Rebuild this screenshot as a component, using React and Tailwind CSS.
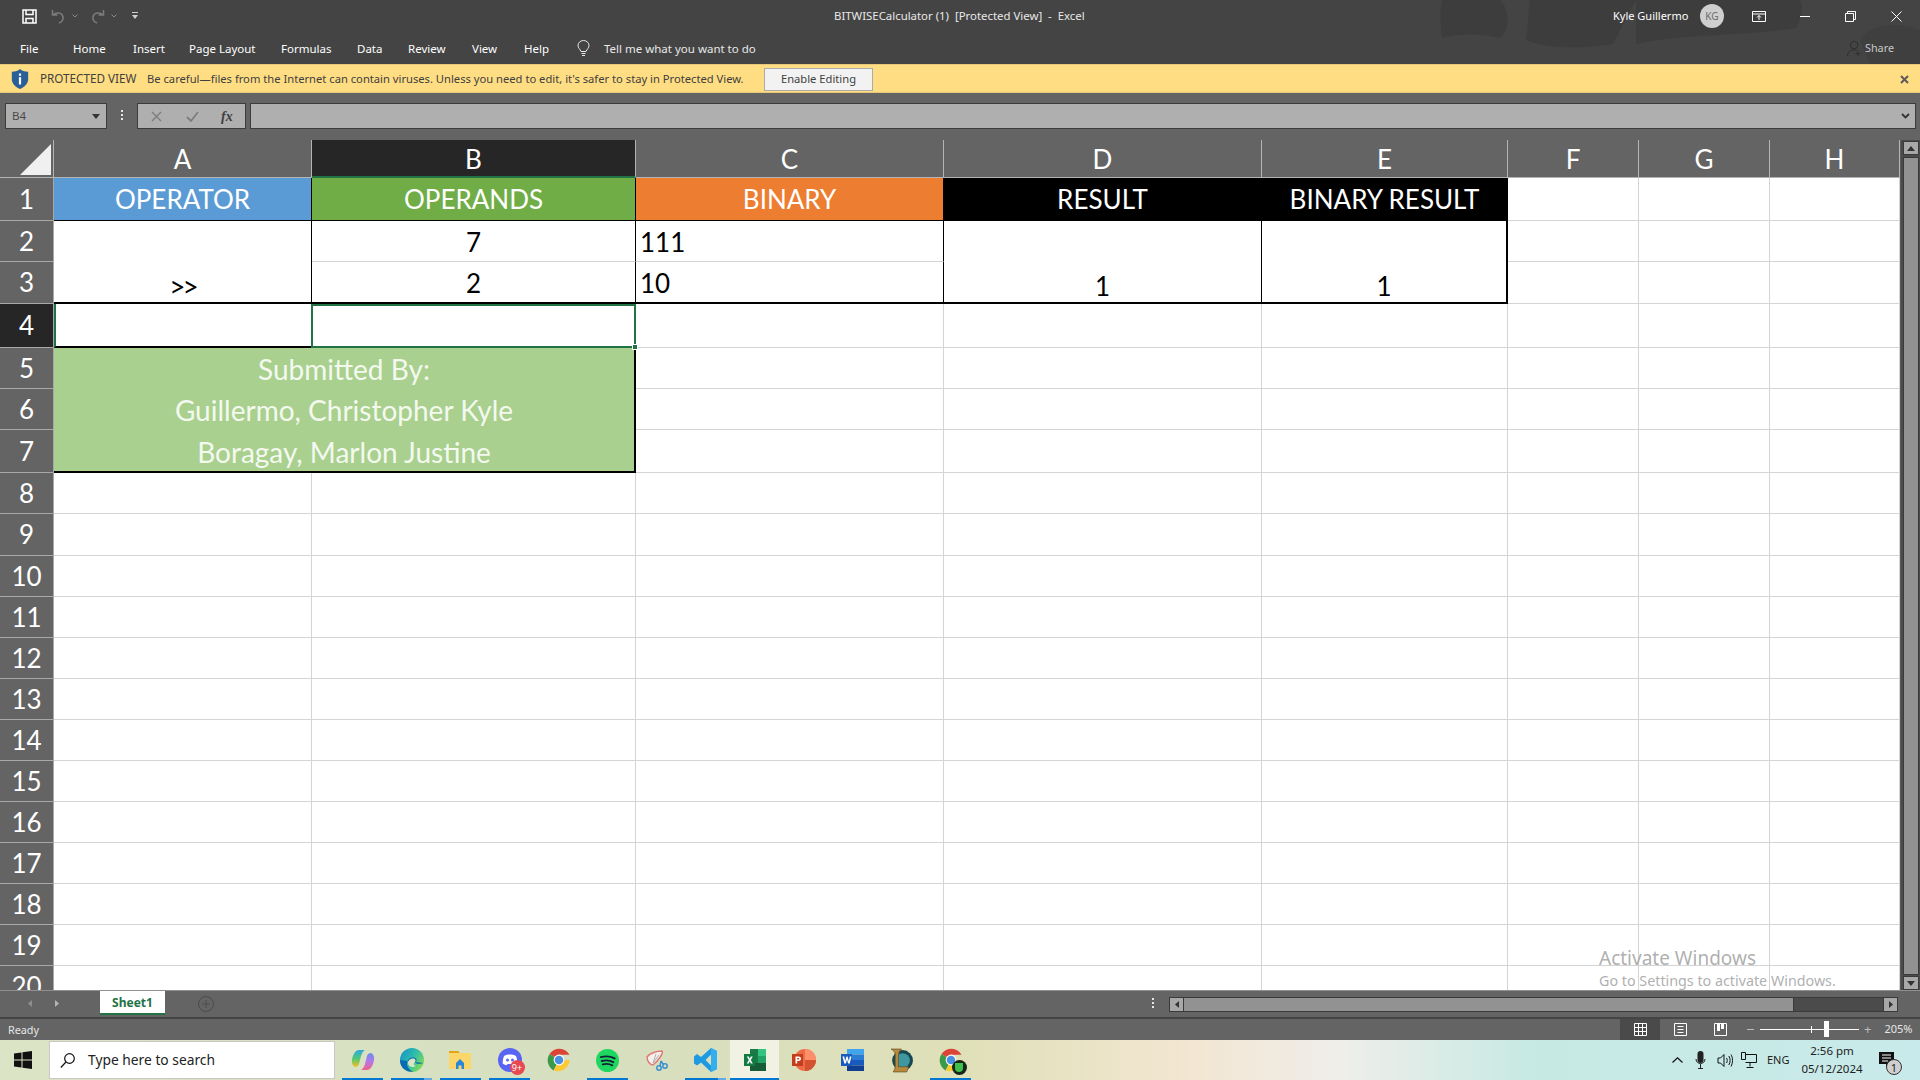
// App.jsx - Excel window in protected view, with the Windows taskbar under it

import React from "react";

const UI_FONT = "font-['Noto_Sans','Open_Sans',sans-serif]";
const SHEET_FONT = "font-['Lato','Noto_Sans',sans-serif]";

const COLUMNS = ["A", "B", "C", "D", "E", "F", "G", "H"];
const BLANK_ROWS = [8, 9, 10, 11, 12, 13, 14, 15, 16, 17, 18, 19, 20];
const TABS = [
  { label: "File", width: "w-[53px]" },
  { label: "Home", width: "w-[60px]" },
  { label: "Insert", width: "w-[56px]" },
  { label: "Page Layout", width: "w-[92px]" },
  { label: "Formulas", width: "w-[76px]" },
  { label: "Data", width: "w-[51px]" },
  { label: "Review", width: "w-[64px]" },
  { label: "View", width: "w-[52px]" },
  { label: "Help", width: "w-[54px]" },
];

// Plain white grid cell
const Blank = () => (
  <div className="bg-white border-r border-b border-[#d4d4d4]" />
);

const ColHeader = ({ label, active }) => (
  <div
    className={`flex items-center justify-center border-r border-[#b4b4b4] border-b pt-[2px] text-[26px] text-white ${
      active ? "bg-[#262626] border-b-2 border-b-[#217346]" : "bg-[#646464] border-b-[#b4b4b4]"
    }`}
  >
    {label}
  </div>
);

const RowHeader = ({ n, active }) => (
  <div
    className={`flex items-center justify-center overflow-hidden border-b border-r border-[#a8a8a8] text-[26px] text-white ${
      active ? "bg-[#262626]" : "bg-[#646464]"
    }`}
  >
    {n}
  </div>
);

const TitleHeader = ({ label, color, extra }) => (
  <div
    className={`flex items-center justify-center border-r border-b border-black text-[26px] text-white ${color} ${extra || ""}`}
  >
    {label}
  </div>
);

const TitleTexture = () => (
  <svg className="absolute top-0 left-[1400px] h-[64px] w-[520px]" viewBox="0 0 520 64">
    <path d="M42 0 C40 10 40 25 42 38 C60 33 80 34 100 38 C110 30 110 10 100 0 Z" fill="#3d3d3d" />
    <path d="M130 0 C128 15 128 30 126 40 C150 50 190 48 213 44 L236 0 Z" fill="#3d3d3d" />
    <path d="M236 0 L236 44 C280 34 350 36 396 28 C400 20 405 10 400 0 Z" fill="#3d3d3d" />
    <path d="M460 40 C470 22 500 22 520 30 L520 64 L470 64 Z" fill="#3f3f3f" />
  </svg>
);

const TitleBar = () => (
  <div className="flex h-[32px] items-center text-white">
    <svg className="ml-[22px] h-[15px] w-[15px]" viewBox="0 0 15 15" fill="none" stroke="#fff" strokeWidth="1.5">
      <path d="M1 1h13v13H1z" />
      <path d="M4 1v4.500h7V1M4 14V9.500h7V14" />
    </svg>
    <svg className="ml-[14px] h-[15px] w-[15px]" viewBox="0 0 15 15" fill="none" stroke="#7b7b7b" strokeWidth="1.6">
      <path d="M1.500 1v5h5M2 6c3-3 9-3 10 2 .5 3-1.500 5-4 6" />
    </svg>
    <svg className="ml-[6px] h-[4px] w-[6px]" viewBox="0 0 6 4" fill="none" stroke="#8a8a8a">
      <path d="M.5.5 3 3 5.500.5" />
    </svg>
    <svg className="ml-[12px] h-[15px] w-[15px]" viewBox="0 0 15 15" fill="none" stroke="#7b7b7b" strokeWidth="1.6">
      <path d="M13.500 1v5h-5M13 6c-3-3-9-3-10 2-.5 3 1.500 5 4 6" />
    </svg>
    <svg className="ml-[6px] h-[4px] w-[6px]" viewBox="0 0 6 4" fill="none" stroke="#8a8a8a">
      <path d="M.5.5 3 3 5.500.5" />
    </svg>
    <svg className="ml-[15px] h-[8px] w-[6px]" viewBox="0 0 6 8" fill="#d0d0d0">
      <path d="M0 0h6v1H0zM0 3h6L3 7z" />
    </svg>
    <div className="ml-[696px] w-[260px] whitespace-pre text-[11.4px] text-[#e8e8e8]">
      BITWISECalculator (1)  [Protected View]  -  Excel
    </div>
    <div className="ml-[519px] w-[76px] whitespace-nowrap text-[11px]">Kyle Guillermo</div>
    <div className="ml-[11px] flex h-[24px] w-[24px] items-center justify-center rounded-full bg-[#cfcfcf] text-[10px] text-[#6b6b6b]">
      KG
    </div>
    <svg className="ml-[28px] h-[11px] w-[14px]" viewBox="0 0 14 11" fill="none" stroke="#fff">
      <path d="M.5.5h13v10H.5zM.5 3h13M7 9V4.500M5 6.500l2-2 2 2" />
    </svg>
    <div className="ml-[34px] h-px w-[10px] bg-white" />
    <svg className="ml-[35px] h-[11px] w-[11px]" viewBox="0 0 11 11" fill="none" stroke="#fff">
      <path d="M.5 2.500h8v8h-8zM2.500 2.500v-2h8v8h-2" />
    </svg>
    <svg className="ml-[35px] h-[11px] w-[11px]" viewBox="0 0 11 11" fill="none" stroke="#fff">
      <path d="M.5.5l10 10M10.500.5l-10 10" />
    </svg>
  </div>
);

const RibbonTabs = () => (
  <div className="flex h-[32px] items-center pt-[1px] text-[11.5px] text-white">
    <div className="flex pl-[20px]">
      {TABS.map((tab) => (
        <div key={tab.label} className={tab.width}>
          {tab.label}
        </div>
      ))}
    </div>
    <svg className="ml-[-1px] h-[17px] w-[13px]" viewBox="0 0 13 17" fill="none" stroke="#e8e8e8">
      <path d="M4 11.500C3 9 1 8 1 5.500a5.500 5 0 0 1 11 0c0 2.500-2 3.500-3 6zM4.500 13.500h4M5 15.500h3" />
    </svg>
    <div className="ml-[14px] w-[152px] whitespace-nowrap text-[#e8e8e8]">Tell me what you want to do</div>
    <svg className="ml-[1091px] h-[17px] w-[15px]" viewBox="0 0 15 17" fill="none" stroke="#2e2e2e">
      <circle cx="7" cy="5" r="3.800" />
      <path d="M.5 16c0-4 3-6 6.500-6 1 0 2 .2 2.800.5M11 11v5M8.500 13.500h5" />
    </svg>
    <div className="ml-[3px] text-[10.8px] text-[#c8c8c8]">Share</div>
  </div>
);

const ProtectedBar = () => (
  <div className="flex h-[29px] items-center border-b border-t border-[#e8c97a] bg-[#ffdd82] pt-[1px] text-[11.2px] text-[#404040]">
    <svg className="ml-[10px] h-[20px] w-[20px]" viewBox="0 0 20 22">
      <path d="M10 0c2 2 5 3 9 3v8c0 5-4 9-9 11C5 20 1 16 1 11V3c4 0 7-1 9-3z" fill="#2a6099" />
      <rect x="8.800" y="9" width="2.400" height="8" fill="#fff" />
      <rect x="8.800" y="5" width="2.400" height="2.400" fill="#fff" />
    </svg>
    <div className="ml-[10px] w-[107px] whitespace-nowrap text-[11.7px]">PROTECTED VIEW</div>
    <div className="w-[617px] whitespace-nowrap">
      Be careful—files from the Internet can contain viruses. Unless you need to edit, it's safer to stay in Protected View.
    </div>
    <div className="flex h-[23px] w-[109px] items-center justify-center border border-[#ababab] bg-[#f2f2f2] text-[#404040]">
      Enable Editing
    </div>
    <svg className="ml-[1027px] h-[9px] w-[9px]" viewBox="0 0 9 9" fill="none" stroke="#5a5a5a" strokeWidth="2">
      <path d="M1 1l7 7M8 1L1 8" />
    </svg>
  </div>
);

const FormulaBar = () => (
  <div className="flex h-[47px] items-start bg-[#646464] pt-[10px] pl-[5px] pr-[4px]">
    <div className="flex h-[26px] w-[102px] items-center justify-between border border-[#3c3c3c] bg-[#afafaf] pl-[6px] pr-[6px] text-[11.5px] text-[#4a4a4a]">
      B4
      <svg className="h-[5px] w-[8px]" viewBox="0 0 8 5" fill="#333">
        <path d="M0 0h8L4 5z" />
      </svg>
    </div>
    <div className="ml-[14px] mr-[14px] mt-[7px] flex flex-col gap-[2px]">
      <div className="h-[2px] w-[2px] bg-[#e6e6e6]" />
      <div className="h-[2px] w-[2px] bg-[#e6e6e6]" />
      <div className="h-[2px] w-[2px] bg-[#e6e6e6]" />
    </div>
    <div className="flex h-[26px] w-[109px] items-center border border-[#3c3c3c] bg-[#afafaf]">
      <svg className="ml-[13px] h-[11px] w-[11px]" viewBox="0 0 11 11" fill="none" stroke="#7d7d7d" strokeWidth="1.400">
        <path d="M1 1l9 9M10 1l-9 9" />
      </svg>
      <svg className="ml-[24px] h-[11px] w-[13px]" viewBox="0 0 13 11" fill="none" stroke="#7d7d7d" strokeWidth="1.800">
        <path d="M1 6l4 4 7-9" />
      </svg>
      <div className="ml-[22px] font-['Liberation_Serif',serif] text-[14px] font-bold italic text-[#404040]">fx</div>
    </div>
    <div className="ml-[4px] flex h-[26px] flex-1 items-center justify-end border border-[#3c3c3c] bg-[#afafaf] pr-[5px]">
      <svg className="h-[6px] w-[9px]" viewBox="0 0 9 6" fill="none" stroke="#333" strokeWidth="1.800">
        <path d="M1 1l3.500 3.500L8 1" />
      </svg>
    </div>
  </div>
);

const Sheet = () => (
  <div className={`relative h-[850px] w-[1900px] overflow-hidden bg-white ${SHEET_FONT}`}>
    <div className="grid grid-cols-[54px_258px_324px_308px_318px_246px_131px_131px_130px] grid-rows-[38px_43px_41px_42px_44px_41px_41px_43px_41px_42px_41px_41px_41px_41px_41px_41px_41px_41px_41px_41px_41px]">
      {/* Corner */}
      <div className="flex items-end justify-end border-r border-b border-[#b4b4b4] bg-[#646464] pb-[2px] pr-[2px]">
        <div className="h-[31px] w-[31px] bg-[#f0f0f0] [clip-path:polygon(100%_0,100%_100%,0_100%)]" />
      </div>
      {COLUMNS.map((col) => (
        <ColHeader key={col} label={col} active={col === "B"} />
      ))}

      {/* Row 1 */}
      <RowHeader n={1} />
      <TitleHeader label="OPERATOR" color="bg-[#5b9bd5]" />
      <TitleHeader label="OPERANDS" color="bg-[#70ad47]" />
      <TitleHeader label="BINARY" color="bg-[#ed7d31]" />
      <TitleHeader label="RESULT" color="bg-black" />
      <TitleHeader label="BINARY RESULT" color="bg-black" />
      <Blank />
      <Blank />
      <Blank />

      {/* Rows 2 and 3, A D E are merged */}
      <RowHeader n={2} />
      <div className="row-span-2 flex items-end justify-center border-r border-b-2 border-black bg-white text-[28px] leading-[32px] tracking-[-3px] text-black">
        &gt;&gt;
      </div>
      <div className="flex items-center justify-center border-r border-b border-r-black border-b-[#d4d4d4] bg-white pt-[2px] text-[26px] text-black">
        7
      </div>
      <div className="flex items-center border-r border-b border-r-black border-b-[#d4d4d4] bg-white pl-[4px] pt-[2px] text-[26px] text-black">
        111
      </div>
      <div className="row-span-2 flex items-end justify-center border-r border-b-2 border-black bg-white text-[26px] leading-[32px] text-black">
        1
      </div>
      <div className="row-span-2 flex items-end justify-center border-r-2 border-b-2 border-black bg-white text-[26px] leading-[32px] text-black">
        1
      </div>
      <Blank />
      <Blank />
      <Blank />
      <RowHeader n={3} />
      <div className="flex items-center justify-center border-r border-b-2 border-black bg-white pt-[2px] text-[26px] text-black">
        2
      </div>
      <div className="flex items-center border-r border-b-2 border-black bg-white pl-[4px] pt-[2px] text-[26px] text-black">
        10
      </div>
      <Blank />
      <Blank />
      <Blank />

      {/* Row 4, B4 is selected */}
      <RowHeader n={4} active />
      <div className="border-b-2 border-l-2 border-b-black border-l-[#217346] bg-white" />
      <div className="relative -ml-[1px] border-2 border-[#217346] bg-white">
        <div className="absolute bottom-[-4px] right-[-4px] h-[6px] w-[6px] border border-white bg-[#217346]" />
      </div>
      <Blank />
      <Blank />
      <Blank />
      <Blank />
      <Blank />
      <Blank />

      {/* Rows 5 to 7, merged credits block */}
      <RowHeader n={5} />
      <div className="col-span-2 row-span-3 grid grid-rows-[41px_41px_43px] items-center border-r-2 border-b-2 border-black bg-[#a9d08e] text-center text-[28px] text-[#f4f9f0]">
        <div>Submitted By:</div>
        <div>Guillermo, Christopher Kyle</div>
        <div>Boragay, Marlon Justine</div>
      </div>
      <Blank />
      <Blank />
      <Blank />
      <Blank />
      <Blank />
      <Blank />
      <RowHeader n={6} />
      <Blank />
      <Blank />
      <Blank />
      <Blank />
      <Blank />
      <Blank />
      <RowHeader n={7} />
      <Blank />
      <Blank />
      <Blank />
      <Blank />
      <Blank />
      <Blank />

      {BLANK_ROWS.map((n) => (
        <React.Fragment key={n}>
          <RowHeader n={n} />
          {COLUMNS.map((col) => (
            <Blank key={col} />
          ))}
        </React.Fragment>
      ))}
    </div>

    {/* Windows watermark sits over the grid */}
    <div className={`absolute left-[1599px] top-[806px] text-[#9a9a9a]/80 ${UI_FONT}`}>
      <div className="text-[19px] leading-[24px]">Activate Windows</div>
      <div className="text-[14.3px] leading-[22px]">Go to Settings to activate Windows.</div>
    </div>
  </div>
);

const VerticalScroll = () => (
  <div className="flex h-[850px] w-[20px] flex-col items-center border-l border-[#5a5a5a] bg-[#4b4b4b] pl-[2px] pr-[1px] pt-[1px]">
    <div className="flex h-[14px] w-full items-center justify-center border border-[#3a3a3a] bg-[#a8a8a8]">
      <svg className="h-[5px] w-[8px]" viewBox="0 0 8 5" fill="#333">
        <path d="M4 0l4 5H0z" />
      </svg>
    </div>
    <div className="mt-[2px] w-full flex-1 border border-[#3a3a3a] bg-[#929292]" />
    <div className="mt-[1px] flex h-[14px] w-full items-center justify-center border border-[#3a3a3a] bg-[#a8a8a8]">
      <svg className="h-[5px] w-[8px]" viewBox="0 0 8 5" fill="#333">
        <path d="M0 0h8L4 5z" />
      </svg>
    </div>
  </div>
);

const SheetTabs = () => (
  <div className="flex h-[29px] items-start border-b-2 border-[#444] border-t border-t-[#909090] bg-[#646464]">
    <svg className="ml-[28px] mt-[9px] h-[7px] w-[4px]" viewBox="0 0 4 7" fill="#8e8e8e">
      <path d="M4 0v7L0 3.500z" />
    </svg>
    <svg className="ml-[23px] mt-[9px] h-[7px] w-[4px]" viewBox="0 0 4 7" fill="#b5b5b5">
      <path d="M0 0v7l4-3.500z" />
    </svg>
    <div className="ml-[41px] flex h-[24px] w-[65px] items-center justify-center border-b-2 border-[#217346] bg-white pt-[1px] text-[12px] font-bold text-[#217346]">
      Sheet1
    </div>
    <svg className="ml-[33px] mt-[5px] h-[16px] w-[16px]" viewBox="0 0 16 16" fill="none" stroke="#4c4c4c">
      <circle cx="8" cy="8" r="7.500" />
      <path d="M8 4v8M4 8h8" />
    </svg>
    <div className="ml-[938px] mt-[7px] flex flex-col gap-[2px]">
      <div className="h-[2px] w-[2px] bg-[#e6e6e6]" />
      <div className="h-[2px] w-[2px] bg-[#e6e6e6]" />
      <div className="h-[2px] w-[2px] bg-[#e6e6e6]" />
    </div>
    <div className="ml-[15px] mt-[6px] flex h-[15px] w-[729px] border border-[#3a3a3a] bg-[#4b4b4b]">
      <div className="flex w-[14px] items-center justify-center border-r border-[#3a3a3a] bg-[#a8a8a8]">
        <svg className="h-[7px] w-[4px]" viewBox="0 0 4 7" fill="#333">
          <path d="M4 0v7L0 3.500z" />
        </svg>
      </div>
      <div className="w-[610px] border-r border-[#3a3a3a] bg-[#929292]" />
      <div className="ml-auto flex w-[14px] items-center justify-center border-l border-[#3a3a3a] bg-[#a8a8a8]">
        <svg className="h-[7px] w-[4px]" viewBox="0 0 4 7" fill="#333">
          <path d="M0 0v7l4-3.500z" />
        </svg>
      </div>
    </div>
  </div>
);

const StatusBar = () => (
  <div className="flex h-[21px] items-center bg-[#646464] text-[10.8px] text-[#e6e6e6]">
    <div className="ml-[8px] w-[1612px] pt-[1px]">Ready</div>
    <div className="flex h-full w-[40px] items-center justify-center bg-[#4a4a4a]">
      <svg className="h-[13px] w-[13px]" viewBox="0 0 13 13" fill="none" stroke="#fff">
        <path d="M.5.5h12v12H.5zM4.500.5v12M8.500.5v12M.5 4.500h12M.5 8.500h12" />
      </svg>
    </div>
    <div className="flex w-[40px] justify-center">
      <svg className="h-[13px] w-[13px]" viewBox="0 0 13 13" fill="none" stroke="#fff">
        <path d="M.5.5h12v12H.5zM3.500 3.500h6M3.500 6.500h6M3.500 9.500h6" />
      </svg>
    </div>
    <div className="flex w-[40px] justify-center">
      <svg className="h-[13px] w-[13px]" viewBox="0 0 13 13" fill="none" stroke="#fff">
        <path d="M.5.500h12v12H.5z" />
        <path d="M3 0h3v8H3zM7 0h3v6H7z" fill="#fff" stroke="none" />
      </svg>
    </div>
    <div className="ml-[7px] h-px w-[7px] bg-[#bdbdbd]" />
    <div className="relative ml-[6px] h-px w-[99px] bg-white">
      <div className="absolute left-[51px] top-[-3px] h-[7px] w-px bg-white" />
      <div className="absolute left-[64px] top-[-8px] h-[16px] w-[5px] bg-white" />
    </div>
    <div className="ml-[5px] text-[13px] leading-none text-[#bdbdbd]">+</div>
    <div className="ml-[13px] text-[11px]">205%</div>
  </div>
);

const IconSlot = ({ running, half, active, children }) => (
  <div className={`relative flex h-[40px] w-[49px] shrink-0 items-center justify-center ${active ? "bg-[#f2f2e4]" : ""}`}>
    {children}
    {running && (
      <div className={`absolute bottom-0 flex h-[2px] ${active ? "left-0 w-[49px]" : "left-[4px] w-[41px]"}`}>
        <div className="flex-1 bg-[#0078d4]" />
        {half && <div className="w-[8px] bg-[#64a8e4]" />}
      </div>
    )}
  </div>
);

const ChromeIcon = () => (
  <svg viewBox="0 0 24 24" className="h-[24px] w-[24px]">
    <path d="M12 12 2.500 6A11.800 11.800 0 0 1 22.600 6.800H12z" fill="#db4437" />
    <path d="M12 12 6.600 22.500A11.800 11.800 0 0 1 2.500 6z" fill="#3a9a4a" />
    <path d="M12 12h10.600A11.800 11.800 0 0 1 6.600 22.500z" fill="#fcc934" />
    <circle cx="12" cy="12" r="5.400" fill="#fff" />
    <circle cx="12" cy="12" r="4.300" fill="#4a90e2" />
  </svg>
);

const Taskbar = () => (
  <div className={`flex h-[40px] items-center bg-[linear-gradient(90deg,#dbe4c4_0%,#d6dfc0_30%,#dfe0b8_50%,#f3e6d2_62%,#eeeeea_70%,#c6e9e3_80%,#c9eaea_100%)] ${UI_FONT}`}>
    <svg className="ml-[14px] h-[18px] w-[18px]" viewBox="0 0 18 18" fill="#111">
      <path d="M0 2.500 7.500 1.400V8.500H0zM8.500 1.200 18 0v8.500H8.500zM0 9.500h7.500v7.100L0 15.500zM8.500 9.500H18V18L8.500 16.800z" />
    </svg>
    <div className="ml-[17px] flex h-[38px] w-[286px] items-center border border-[#c8c8c8] bg-white pt-[1px] text-[13.8px] text-[#222]">
      <svg className="ml-[10px] h-[15px] w-[15px]" viewBox="0 0 15 15" fill="none" stroke="#111" strokeWidth="1.200">
        <circle cx="9.500" cy="5.500" r="4.800" />
        <path d="M6 9 .8 14.500" />
      </svg>
      <div className="ml-[13px] whitespace-nowrap">Type here to search</div>
    </div>

    <div className="ml-[3px] flex">
      <IconSlot running>
        <svg viewBox="0 0 24 24" className="h-[24px] w-[24px]">
          <defs>
            <linearGradient id="copA" x1="0.5" y1="0" x2="0.5" y2="1">
              <stop offset="0" stopColor="#2ea9e0" />
              <stop offset="0.5" stopColor="#50c878" />
              <stop offset="1" stopColor="#f4c020" />
            </linearGradient>
            <linearGradient id="copB" x1="0.5" y1="0" x2="0.5" y2="1">
              <stop offset="0" stopColor="#6a8cf0" />
              <stop offset="0.5" stopColor="#b478e8" />
              <stop offset="1" stopColor="#f0608a" />
            </linearGradient>
          </defs>
          <path d="M8 2h6c-2 1-3 3-4 6l-2 8c-.5 2-2 3-4 3-2.500-1-3.500-4-3-7 .5-4 3-10 7-10z" fill="url(#copA)" />
          <path d="M16 22h-6c2-1 3-3 4-6l2-8c.5-2 2-3 4-3 2.500 1 3.500 4 3 7-.5 4-3 10-7 10z" fill="url(#copB)" />
        </svg>
      </IconSlot>
      <IconSlot running half>
        <svg viewBox="0 0 24 24" className="h-[24px] w-[24px]">
          <defs>
            <linearGradient id="edgeA" x1="0" y1="0" x2="1" y2="0.6">
              <stop offset="0" stopColor="#0c8fd0" />
              <stop offset="0.6" stopColor="#32bfa8" />
              <stop offset="1" stopColor="#7ed957" />
            </linearGradient>
          </defs>
          <circle cx="12" cy="12" r="12" fill="url(#edgeA)" />
          <path d="M23.500 15c-2 .8-7 1.500-8.500-.5 2-1 2.500-4-1-5-4-.8-7.500 2.500-7 7 .3 3 3 6 6.500 7.300C5.500 24.500 0 19 0 12" fill="#0b6ab0" />
          <path d="M8 15c0-3 3-5 6-4.500 2 .5 2 3 .5 4-1.500 1-.8 3 1.500 3.500-3 2-8 1-8-3z" fill="#dbe4c4" />
        </svg>
      </IconSlot>
      <IconSlot running>
        <svg viewBox="0 0 24 24" className="h-[24px] w-[24px]">
          <path d="M0 3h9l2 2h-11z" fill="#e0a416" />
          <path d="M0 5h22v16H0z" fill="#fbd669" />
          <path d="M7 15l4-4 4 4v6h-2.500v-3.500h-3V21H7z" fill="#2a86d8" />
        </svg>
      </IconSlot>
      <IconSlot running>
        <div className="relative">
          <svg viewBox="0 0 24 24" className="h-[24px] w-[24px]">
            <circle cx="12" cy="12" r="12" fill="#5865f2" />
            <path d="M6 8c2-1.200 4-1.500 6-1.500s4 .3 6 1.500c1 2.500 1.500 5 1.300 7.500-1.500 1-3 1.500-4 1.800l-.8-1.300H9.500l-.8 1.300c-1-.3-2.500-.8-4-1.800C4.500 13 5 10.500 6 8z" fill="#fff" />
            <circle cx="9.500" cy="12" r="1.500" fill="#5865f2" />
            <circle cx="14.500" cy="12" r="1.500" fill="#5865f2" />
          </svg>
          <div className="absolute bottom-[-3px] right-[-3px] flex h-[15px] w-[15px] items-center justify-center rounded-full bg-[#e8484f] text-[9px] leading-none text-white">
            9+
          </div>
        </div>
      </IconSlot>
      <IconSlot>
        <ChromeIcon />
      </IconSlot>
      <IconSlot running>
        <svg viewBox="0 0 24 24" className="h-[23px] w-[23px]">
          <circle cx="12" cy="12" r="12" fill="#1ed760" />
          <path d="M5 8.500c5-1.300 10-1 14.500 1.300M6 12.500c4-1 8.500-.8 12 1.200M7 16c3.500-.8 7-.6 10 1" fill="none" stroke="#123" strokeWidth="2" strokeLinecap="round" />
        </svg>
      </IconSlot>
      <IconSlot>
        <svg viewBox="0 0 24 24" className="h-[24px] w-[24px]">
          <path d="M2 9c3-4 10-6 15-6 2 2-4 10-9 14-3 0-6-4-6-8z" fill="#f4f0ea" stroke="#e07878" strokeWidth="1.500" />
          <path d="M8 15 11 6M8 15l6-8" stroke="#b0b0b0" fill="none" />
          <circle cx="14" cy="20" r="2.200" fill="none" stroke="#3a90d0" strokeWidth="1.500" />
          <circle cx="20" cy="18" r="2.200" fill="none" stroke="#3a90d0" strokeWidth="1.500" />
          <path d="M15 18l1-5M18.500 16.500 16 13" stroke="#3a90d0" strokeWidth="1.500" />
        </svg>
      </IconSlot>
      <IconSlot running half>
        <svg viewBox="0 0 24 24" className="h-[24px] w-[24px]">
          <path d="M17 0l6 3v18l-6 3-10-9.500-4 3L0 15.500V8.500L3 6l4 3L17 0zm0 6.500L11.500 12 17 17.500z" fill="#1e9ae0" />
          <path d="M17 0l6 3v18l-6 3z" fill="#33aef0" />
        </svg>
      </IconSlot>
      <IconSlot running active>
        <svg viewBox="0 0 24 24" className="h-[24px] w-[24px]">
          <path d="M7 1h16v22H7z" fill="#1a7a48" />
          <path d="M15 1h8v7h-8z" fill="#33c481" />
          <path d="M15 8h8v7h-8z" fill="#21a366" />
          <path d="M7 15h16v8H7z" fill="#185c37" />
          <path d="M1 6h11v12H1z" fill="#107c41" />
          <path d="M3.800 8.500h2l1 2.200 1-2.200h2l-2 3.500 2 3.500h-2l-1-2.300-1 2.300h-2l2-3.500z" fill="#fff" />
        </svg>
      </IconSlot>
      <IconSlot>
        <svg viewBox="0 0 24 24" className="h-[24px] w-[24px]">
          <circle cx="13" cy="12" r="11" fill="#ed6c47" />
          <path d="M13 1a11 11 0 0 1 11 11H13z" fill="#ff8f6b" />
          <path d="M13 12h11a11 11 0 0 1-11 11z" fill="#d35230" />
          <path d="M0 6h11v12H0z" fill="#c43e1c" />
          <path d="M3.500 8.500h3c3.500 0 3.500 4.500 0 4.500H5.200v2.500H3.500zM5.200 10v1.600h1.300c1 0 1-1.600 0-1.600z" fill="#fff" fillRule="evenodd" />
        </svg>
      </IconSlot>
      <IconSlot>
        <svg viewBox="0 0 24 24" className="h-[24px] w-[24px]">
          <path d="M6 1h17v5.500H6z" fill="#41a5ee" />
          <path d="M6 6.500h17V12H6z" fill="#2b7cd3" />
          <path d="M6 12h17v5.500H6z" fill="#185abd" />
          <path d="M6 17.500h17V23H6z" fill="#103f91" />
          <path d="M0 6h11v12H0z" fill="#185abd" />
          <path d="M1.500 8.500h1.700l1 4.500 1.200-4.500h1.200l1.200 4.500 1-4.500h1.700l-1.800 7H7.100L6 11.500 4.900 15.500H3.300z" fill="#fff" />
        </svg>
      </IconSlot>
      <IconSlot>
        <svg viewBox="0 0 24 24" className="h-[25px] w-[25px]">
          <circle cx="13" cy="12" r="10" fill="#17484f" />
          <circle cx="13" cy="12" r="7" fill="#3f98a0" />
          <path d="M2 1h10C10 3 9 5 9 8v10h10l-2 5H4c1-2 2-3 2-6V6C6 4 4 2 2 1z" fill="#b88a3e" stroke="#5c4420" strokeWidth=".6" />
        </svg>
      </IconSlot>
      <IconSlot running>
        <div className="relative">
          <ChromeIcon />
          <div className="absolute bottom-[-3px] right-[-4px] flex h-[15px] w-[15px] items-center justify-center rounded-full bg-[#16261a]">
            <div className="h-[9px] w-[8px] rounded-b-full bg-[#3fc04a]" />
          </div>
        </div>
      </IconSlot>
    </div>

    {/* Tray */}
    <svg className="ml-[697px] h-[6px] w-[11px]" viewBox="0 0 11 6" fill="none" stroke="#111" strokeWidth="1.200">
      <path d="M.5 5.500 5.500.8l5 4.700" />
    </svg>
    <svg className="ml-[12px] h-[18px] w-[11px]" viewBox="0 0 11 18" fill="#222">
      <rect x="2.500" y="0" width="6" height="12" rx="3" />
      <path d="M1 8c0 6 9 6 9 0M5.500 13v4M3 17.500h5" fill="none" stroke="#222" />
    </svg>
    <svg className="ml-[11px] h-[15px] w-[16px]" viewBox="0 0 16 15" fill="none" stroke="#111">
      <path d="M1 5h2.500L7 1.500v12L3.500 10H1zM9.500 5c1 1.500 1 3.500 0 5M11.800 3c1.800 3 1.800 6 0 9M14 1.500c2 3.500 2 8 0 12" />
    </svg>
    <svg className="ml-[8px] h-[16px] w-[16px]" viewBox="0 0 16 16" fill="none" stroke="#111">
      <path d="M4.500 2.500h11v8h-11M.5.500h4v7h-4zM9 10.500v4M5.500 15.500h7" />
    </svg>
    <div className="ml-[10px] w-[30px] text-[11px] text-[#222]">ENG</div>
    <div className="w-[70px] text-center text-[11.500px] leading-[18px] text-[#222]">
      <div>2:56 pm</div>
      <div>05/12/2024</div>
    </div>
    <div className="relative ml-[12px]">
      <svg className="h-[16px] w-[15px]" viewBox="0 0 15 16" fill="#111">
        <path d="M0 0h15v12H9l-2 4v-4H0z" />
        <path d="M3 3h9M3 6h9M3 9h6" stroke="#fff" />
      </svg>
      <div className="absolute bottom-[-7px] right-[-8px] flex h-[16px] w-[16px] items-center justify-center rounded-full border border-[#333] bg-[#cfcfcf] text-[11px] leading-none text-[#222]">
        1
      </div>
    </div>
  </div>
);

export default function App() {
  return (
    <div className={`h-[1080px] w-[1920px] overflow-hidden bg-[#646464] ${UI_FONT}`}>
      <div className="relative bg-[#444444]">
        <TitleTexture />
        <div className="relative">
          <TitleBar />
          <RibbonTabs />
        </div>
      </div>
      <ProtectedBar />
      <FormulaBar />
      <div className="flex">
        <Sheet />
        <VerticalScroll />
      </div>
      <SheetTabs />
      <StatusBar />
      <Taskbar />
    </div>
  );
}
